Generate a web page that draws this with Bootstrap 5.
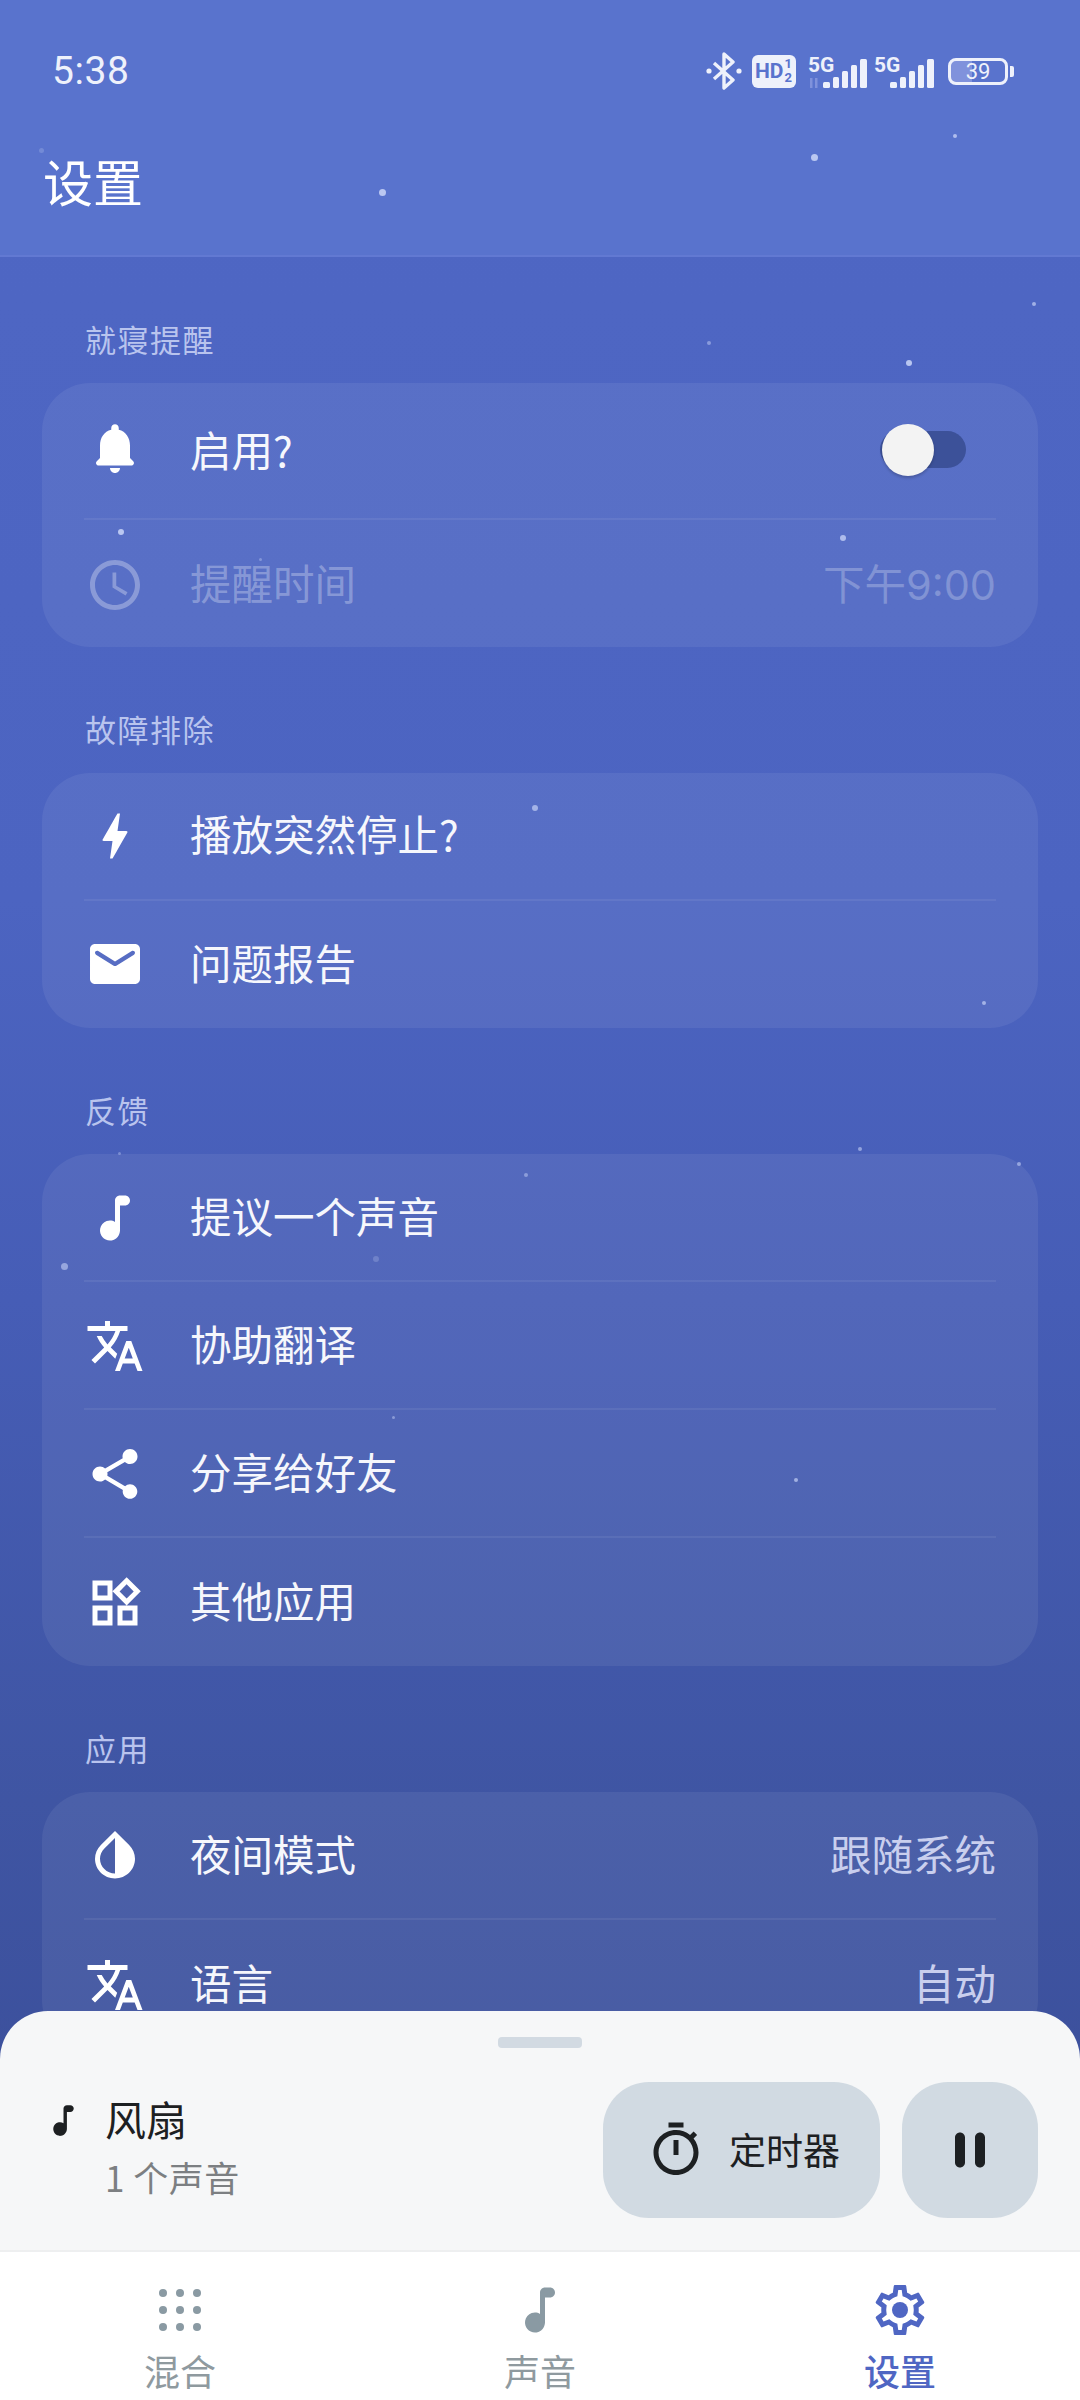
<!DOCTYPE html>
<html lang="zh-CN">
<head>
<meta charset="UTF-8">
<title>设置</title>
<link href="https://cdn.jsdelivr.net/npm/bootstrap@5.3.3/dist/css/bootstrap.min.css" rel="stylesheet">
<style>
    html, body { margin: 0; background: #fff; }
    body, .app-frame { font-family: "Noto Sans CJK SC", "Noto Sans", Roboto, sans-serif; }
    .app-frame { width: 1080px; height: 2400px; background: linear-gradient(180deg, #4f67c4 0, #4c64c1 900px, #465dB6 1300px, #3f55a3 1800px, #3c509c 2100px); }

    .top-head { height: 257px; background: #5973cd; border-bottom: 2px solid #6279d2; }
    .status-row { height: 142px; padding: 0 66px 0 52px; color: #eef1fb; }
    .clock-text { font-family: Roboto, sans-serif; font-size: 39px; letter-spacing: .6px; }
    .page-title { font-size: 50px; line-height: 64px; padding-left: 43px; margin: 6px 0 0; font-weight: 400; color: #fff; }

    .hd-chip { width: 44px; height: 33px; border-radius: 6px; background: #eef1fb; color: #5973cd; font: 700 21px/33px Roboto, sans-serif; padding-left: 3px; margin-left: 10px; margin-right: 12px; gap: 1px; }
    .hd-frac { font-size: 13px; line-height: 14px; }
    .batt-box { width: 60px; height: 27px; border: 3px solid #eef1fb; border-radius: 8px; margin-left: 12px; color: #eef1fb; font: 400 22px/21px Roboto, sans-serif; background: linear-gradient(90deg, #8092dc 0 38%, transparent 38%); }
    .batt-nub { width: 4px; height: 11px; background: #eef1fb; border-radius: 0 2px 2px 0; margin-left: 2px; }

    .set-list { padding: 0 42px; }
    .set-label { height: 126px; padding: 0 0 24px 43px; font-size: 31px; line-height: 40px; letter-spacing: 1.5px; color: #b9c4ee; }
    .set-card { border-radius: 48px; background: rgba(255, 255, 255, .065); }
    .set-row { height: 128px; margin: 0 42px; padding-bottom: 3px; border-bottom: 2px solid rgba(255, 255, 255, .065); color: #f6f7fc; font-size: 41.5px; }
    .set-row:last-child { border-bottom: 0; }
    .set-row.slim { height: 127.5px; padding-bottom: 5px; }
    .set-row.tall { height: 137px; padding-bottom: 2px; }
    .set-row.off { height: 127px; padding-bottom: 2px; color: rgba(255, 255, 255, .3); }
    .set-row.off .set-value { color: rgba(255, 255, 255, .25); }
    .row-icon { width: 60px; height: 60px; margin: 5px 45px 0 1px; flex: none; fill: #fff; }
    .set-row.tall .row-icon { margin-top: -4px; }
    .set-row.off .row-icon { fill: rgba(255, 255, 255, .3); }
    .set-value { color: #c9cfee; font-family: Inter, "Noto Sans CJK SC", sans-serif; margin-top: 6px; }

    .sw-track { width: 86px; height: 37px; border-radius: 19px; background: #3c5199; margin-right: 30px; padding-left: 2px; }
    .sw-thumb { width: 52px; height: 52px; flex: none; border-radius: 50%; background: #f3f3f3; box-shadow: 0 2px 3px rgba(0, 0, 0, .2); }

    .star-dot { border-radius: 50%; background: #c4d0f5; }

    .bottom-wrap { left: 0; right: 0; bottom: 0; z-index: 5; }
    .play-sheet { height: 241px; background: #f6f7f8; border-radius: 48px 48px 0 0; border-bottom: 2px solid #eeeff0; padding: 26px 42px 0; }
    .grab-bar { width: 84px; height: 11px; border-radius: 4px; background: #d2dae2; margin: 0 auto 34px; }
    .note-small { width: 41px; height: 41px; flex: none; fill: #1d2022; margin: 0 21px 60px 1px; }
    .play-text { padding-bottom: 8px; }
    .play-name { font-size: 41px; line-height: 52px; color: #1d2022; }
    .play-sub { font-size: 35px; line-height: 46px; margin-top: 10px; color: #7c7f82; letter-spacing: .5px; }
    .pill-btn { height: 136px; border-radius: 46px; background: #d1dae2; border: 0; color: #1d2022; padding: 0; }
    .pill-btn.timer { width: 277px; font-size: 37px; margin-right: 22px; padding-left: 43px; }
    .pill-btn.pause { width: 136px; }
    .pill-btn svg { width: 60px; height: 60px; flex: none; fill: #1d2022; }
    .pill-btn.timer svg { margin-right: 23px; }

    .tab-bar { height: 148px; background: #fff; }
    .tab-item { width: 360px; color: #8f9a9f; font-size: 36px; line-height: 44px; padding-top: 28px; }
    .tab-item svg { width: 60px; height: 60px; fill: #8a9aa3; display: block; margin-bottom: 8px; }
    .tab-item.on { color: #4f66c3; font-weight: 500; }
    .tab-item.on svg { fill: #4f66c3; }
</style>
</head>
<body>
<div class="app-frame position-relative overflow-hidden" id="app">

    <!-- Header -->
    <div class="top-head">
        <div class="status-row d-flex align-items-center justify-content-between">
            <span class="clock-text">5:38</span>
            <div class="d-flex align-items-center">
                <svg width="36" height="38" viewBox="0 0 36 38" fill="none" stroke="#eef1fb" stroke-width="3.4" stroke-linejoin="round"><path d="M8 11l19 17-9 8V2l9 8L8 27"/><circle cx="3" cy="19" r="2.6" fill="#eef1fb" stroke="none"/><circle cx="33" cy="19" r="2.6" fill="#eef1fb" stroke="none"/></svg>
                <div class="hd-chip d-flex align-items-center">HD<div class="hd-frac d-flex flex-column align-items-center"><span>1</span><span>2</span></div></div>
                <svg width="62" height="38" viewBox="0 0 62 38"><text x="0" y="20" font-family="Roboto, sans-serif" font-weight="700" font-size="21" fill="#eef1fb">5G</text><g fill="#8092dc"><rect x="2" y="26" width="2.5" height="10"/><rect x="7" y="26" width="2.5" height="10"/></g><g fill="#eef1fb"><rect x="15" y="30" width="7" height="6" rx="1.5"/><rect x="25" y="25" width="6" height="11" rx="1.5"/><rect x="34" y="19" width="6" height="17" rx="1.5"/><rect x="43" y="13" width="6" height="23" rx="1.5"/><rect x="52" y="7" width="7" height="29" rx="1.5"/></g></svg>
                <svg width="62" height="38" viewBox="0 0 62 38" class="ms-1"><text x="0" y="20" font-family="Roboto, sans-serif" font-weight="700" font-size="21" fill="#eef1fb">5G</text><g fill="#eef1fb"><rect x="16" y="30" width="7" height="6" rx="1.5"/><rect x="26" y="25" width="6" height="11" rx="1.5"/><rect x="35" y="19" width="6" height="17" rx="1.5"/><rect x="44" y="13" width="6" height="23" rx="1.5"/><rect x="53" y="7" width="7" height="29" rx="1.5"/></g></svg>
                <div class="batt-box text-center">39</div>
                <div class="batt-nub"></div>
            </div>
        </div>
        <h1 class="page-title">设置</h1>
    </div>

    <!-- Settings list -->
    <div class="set-list">
        <div class="set-label d-flex align-items-end">就寝提醒</div>
        <div class="set-card">
            <div class="set-row tall d-flex align-items-center">
                <svg class="row-icon" viewBox="0 0 24 24"><path d="M12 22c1.1 0 2-.9 2-2h-4c0 1.1.9 2 2 2zm6-6v-5c0-3.07-1.63-5.64-4.5-6.32V4c0-.83-.67-1.5-1.5-1.5s-1.5.67-1.5 1.5v.68C7.64 5.36 6 7.92 6 11v5l-1.29 1.29c-.63.63-.19 1.71.7 1.71h13.17c.89 0 1.34-1.08.71-1.71L18 16z"/></svg>
                <span class="flex-grow-1">启用?</span>
                <div class="sw-track d-flex align-items-center"><div class="sw-thumb"></div></div>
            </div>
            <div class="set-row off d-flex align-items-center">
                <svg class="row-icon" viewBox="0 0 24 24"><path d="M11.99 2C6.47 2 2 6.48 2 12s4.47 10 9.99 10C17.52 22 22 17.52 22 12S17.52 2 11.99 2zM12 20c-4.42 0-8-3.58-8-8s3.58-8 8-8 8 3.58 8 8-3.58 8-8 8z"/><path d="M12.5 7H11v6l5.25 3.15.75-1.23-4.5-2.67z"/></svg>
                <span class="flex-grow-1">提醒时间</span>
                <span class="set-value">下午9:00</span>
            </div>
        </div>

        <div class="set-label d-flex align-items-end">故障排除</div>
        <div class="set-card">
            <div class="set-row slim d-flex align-items-center">
                <svg class="row-icon" viewBox="0 0 24 24"><path d="M11 21h-1l1-7H7.5c-.58 0-.57-.32-.38-.66.19-.34.05-.08.07-.12C8.48 10.94 10.42 7.54 13 3h1l-1 7h3.5c.49 0 .56.33.47.51l-.07.15C12.96 17.55 11 21 11 21z"/></svg>
                <span>播放突然停止?</span>
            </div>
            <div class="set-row slim d-flex align-items-center">
                <svg class="row-icon" viewBox="0 0 24 24"><path d="M20 4H4c-1.1 0-1.99.9-1.99 2L2 18c0 1.1.9 2 2 2h16c1.1 0 2-.9 2-2V6c0-1.1-.9-2-2-2zm-.4 4.25l-7.07 4.42c-.32.2-.74.2-1.06 0L4.4 8.25c-.25-.16-.4-.43-.4-.72 0-.67.73-1.07 1.3-.72L12 11l6.7-4.19c.57-.35 1.3.05 1.3.72 0 .29-.15.56-.4.72z"/></svg>
                <span>问题报告</span>
            </div>
        </div>

        <div class="set-label d-flex align-items-end">反馈</div>
        <div class="set-card">
            <div class="set-row d-flex align-items-center">
                <svg class="row-icon" viewBox="0 0 24 24"><path d="M12 5v8.55c-.94-.54-2.1-.75-3.33-.32-1.34.48-2.37 1.67-2.61 3.07-.46 2.74 1.86 5.08 4.59 4.65 1.96-.31 3.35-2.11 3.35-4.1V7h2c1.1 0 2-.9 2-2s-.9-2-2-2h-2c-1.1 0-2 .9-2 2z"/></svg>
                <span>提议一个声音</span>
            </div>
            <div class="set-row d-flex align-items-center">
                <svg class="row-icon" viewBox="0 0 24 24"><path d="M12.87 15.07l-2.54-2.51.03-.03c1.74-1.94 2.98-4.17 3.71-6.53H17V4h-7V2H8v2H1v1.99h11.17C11.5 7.92 10.44 9.75 9 11.35 8.07 10.32 7.3 9.19 6.69 8h-2c.73 1.63 1.73 3.17 2.98 4.56l-5.09 5.02L4 19l5-5 3.11 3.11.76-2.04zM18.5 10h-2L12 22h2l1.12-3h4.75L21 22h2l-4.5-12zm-2.62 7l1.62-4.33L19.12 17h-3.24z"/></svg>
                <span>协助翻译</span>
            </div>
            <div class="set-row d-flex align-items-center">
                <svg class="row-icon" viewBox="0 0 24 24"><path d="M18 16.08c-.76 0-1.44.3-1.96.77L8.91 12.7c.05-.23.09-.46.09-.7s-.04-.47-.09-.7l7.05-4.11c.54.5 1.25.81 2.04.81 1.66 0 3-1.34 3-3s-1.34-3-3-3-3 1.34-3 3c0 .24.04.47.09.7L8.04 9.81C7.5 9.31 6.79 9 6 9c-1.66 0-3 1.34-3 3s1.34 3 3 3c.79 0 1.5-.31 2.04-.81l7.12 4.16c-.05.21-.08.43-.08.65 0 1.61 1.31 2.92 2.92 2.92 1.61 0 2.92-1.31 2.92-2.92s-1.31-2.92-2.92-2.92z"/></svg>
                <span>分享给好友</span>
            </div>
            <div class="set-row d-flex align-items-center">
                <svg class="row-icon" viewBox="0 0 24 24"><path d="M16.66 4.52l2.83 2.83-2.83 2.83-2.83-2.83 2.83-2.83M9 5v4H5V5h4m10 10v4h-4v-4h4M9 15v4H5v-4h4m7.66-13.31L11 7.34 16.66 13l5.66-5.66-5.66-5.65zM11 3H3v8h8V3zm10 10h-8v8h8v-8zm-10 0H3v8h8v-8z"/></svg>
                <span>其他应用</span>
            </div>
        </div>

        <div class="set-label d-flex align-items-end">应用</div>
        <div class="set-card">
            <div class="set-row d-flex align-items-center">
                <svg class="row-icon" viewBox="0 0 24 24"><path d="M12 4.81V19c-3.31 0-6-2.63-6-5.87 0-1.56.62-3.03 1.75-4.14L12 4.81M6.35 7.56C4.9 8.99 4 10.96 4 13.13 4 17.48 7.58 21 12 21s8-3.52 8-7.87c0-2.17-.9-4.14-2.35-5.57L12 2 6.35 7.56z"/></svg>
                <span class="flex-grow-1">夜间模式</span>
                <span class="set-value">跟随系统</span>
            </div>
            <div class="set-row d-flex align-items-center">
                <svg class="row-icon" viewBox="0 0 24 24"><path d="M12.87 15.07l-2.54-2.51.03-.03c1.74-1.94 2.98-4.17 3.71-6.53H17V4h-7V2H8v2H1v1.99h11.17C11.5 7.92 10.44 9.75 9 11.35 8.07 10.32 7.3 9.19 6.69 8h-2c.73 1.63 1.73 3.17 2.98 4.56l-5.09 5.02L4 19l5-5 3.11 3.11.76-2.04zM18.5 10h-2L12 22h2l1.12-3h4.75L21 22h2l-4.5-12zm-2.62 7l1.62-4.33L19.12 17h-3.24z"/></svg>
                <span class="flex-grow-1">语言</span>
                <span class="set-value">自动</span>
            </div>
        </div>
    </div>

    <!-- Player sheet and tabs sit over the list -->
    <div class="bottom-wrap position-absolute">
        <div class="play-sheet">
            <div class="grab-bar"></div>
            <div class="d-flex align-items-center">
                <svg class="note-small" viewBox="0 0 24 24"><path d="M12 5v8.55c-.94-.54-2.1-.75-3.33-.32-1.34.48-2.37 1.67-2.61 3.07-.46 2.74 1.86 5.08 4.59 4.65 1.96-.31 3.35-2.11 3.35-4.1V7h2c1.1 0 2-.9 2-2s-.9-2-2-2h-2c-1.1 0-2 .9-2 2z"/></svg>
                <div class="play-text flex-grow-1">
                    <div class="play-name">风扇</div>
                    <div class="play-sub">1 个声音</div>
                </div>
                <button class="btn pill-btn timer d-flex align-items-center">
                    <svg viewBox="0 0 24 24"><path d="M9 1h6v2H9zM19.03 7.39l1.42-1.42c-.43-.51-.9-.99-1.41-1.41l-1.42 1.42C16.07 4.74 14.12 4 12 4c-4.97 0-9 4.03-9 9s4.02 9 9 9 9-4.03 9-9c0-2.12-.74-4.07-1.97-5.61zM12 20c-3.87 0-7-3.13-7-7s3.13-7 7-7 7 3.13 7 7-3.13 7-7 7z"/><path d="M11 8h2v6h-2z"/></svg>
                    定时器
                </button>
                <button class="btn pill-btn pause d-flex align-items-center justify-content-center">
                    <svg viewBox="0 0 24 24"><path d="M8 19c1.1 0 2-.9 2-2V7c0-1.1-.9-2-2-2s-2 .9-2 2v10c0 1.1.9 2 2 2zm6-12v10c0 1.1.9 2 2 2s2-.9 2-2V7c0-1.1-.9-2-2-2s-2 .9-2 2z"/></svg>
                </button>
            </div>
        </div>
        <div class="tab-bar d-flex">
            <div class="tab-item d-flex flex-column align-items-center">
                <svg viewBox="0 0 60 60"><circle cx="13" cy="13" r="4"/><circle cx="30" cy="13" r="4"/><circle cx="47" cy="13" r="4"/><circle cx="13" cy="30" r="4"/><circle cx="30" cy="30" r="4"/><circle cx="47" cy="30" r="4"/><circle cx="13" cy="47" r="4"/><circle cx="30" cy="47" r="4"/><circle cx="47" cy="47" r="4"/></svg>
                混合
            </div>
            <div class="tab-item d-flex flex-column align-items-center">
                <svg viewBox="0 0 24 24"><path d="M12 5v8.55c-.94-.54-2.1-.75-3.33-.32-1.34.48-2.37 1.67-2.61 3.07-.46 2.74 1.86 5.08 4.59 4.65 1.96-.31 3.35-2.11 3.35-4.1V7h2c1.1 0 2-.9 2-2s-.9-2-2-2h-2c-1.1 0-2 .9-2 2z"/></svg>
                声音
            </div>
            <div class="tab-item on d-flex flex-column align-items-center">
                <svg viewBox="0 0 24 24"><path d="M19.43 12.98c.04-.32.07-.64.07-.98 0-.34-.03-.66-.07-.98l2.11-1.65c.19-.15.24-.42.12-.64l-2-3.46c-.09-.16-.26-.25-.44-.25-.06 0-.12.01-.17.03l-2.49 1c-.52-.4-1.08-.73-1.69-.98l-.38-2.65C14.46 2.18 14.25 2 14 2h-4c-.25 0-.46.18-.49.42l-.38 2.65c-.61.25-1.17.59-1.69.98l-2.49-1c-.06-.02-.12-.03-.18-.03-.17 0-.34.09-.43.25l-2 3.46c-.13.22-.07.49.12.64l2.11 1.65c-.04.32-.07.65-.07.98 0 .33.03.66.07.98l-2.11 1.65c-.19.15-.24.42-.12.64l2 3.46c.09.16.26.25.44.25.06 0 .12-.01.17-.03l2.49-1c.52.4 1.08.73 1.69.98l.38 2.65c.03.24.24.42.49.42h4c.25 0 .46-.18.49-.42l.38-2.65c.61-.25 1.17-.59 1.69-.98l2.49 1c.06.02.12.03.18.03.17 0 .34-.09.43-.25l2-3.46c.12-.22.07-.49-.12-.64l-2.11-1.65zm-1.98-1.71c.04.31.05.52.05.73 0 .21-.02.43-.05.73l-.14 1.13.89.7 1.08.84-.7 1.21-1.27-.51-1.04-.42-.9.68c-.43.32-.84.56-1.25.73l-1.06.43-.16 1.13-.2 1.35h-1.4l-.19-1.35-.16-1.13-1.06-.43c-.43-.18-.83-.41-1.23-.71l-.91-.7-1.06.43-1.27.51-.7-1.21 1.08-.84.89-.7-.14-1.13c-.03-.31-.05-.54-.05-.74s.02-.43.05-.73l.14-1.13-.89-.7-1.08-.84.7-1.21 1.27.51 1.04.42.9-.68c.43-.32.84-.56 1.25-.73l1.06-.43.16-1.13.2-1.35h1.39l.19 1.35.16 1.13 1.06.43c.43.18.83.41 1.23.71l.91.7 1.06-.43 1.27-.51.7 1.21-1.07.85-.89.7.14 1.13z"/><circle cx="12" cy="12" r="3.2"/></svg>
                设置
            </div>
        </div>
    </div>
</div>

<script src="https://cdn.jsdelivr.net/npm/bootstrap@5.3.3/dist/js/bootstrap.bundle.min.js"></script>
<script>
    // background stars: x, y, diameter, opacity
    const stars = [
        [382, 192, 7, .9], [814, 157, 7, .9], [955, 136, 4, .8], [41, 150, 5, .25],
        [709, 343, 4, .5], [909, 363, 6, .9], [1034, 304, 4, .7], [121, 532, 6, .9],
        [843, 538, 6, .8], [260, 559, 3, .4], [535, 808, 6, .7], [984, 1003, 4, .7],
        [860, 1149, 4, .6], [1019, 1164, 4, .6], [526, 1175, 4, .5], [119, 1153, 3, .4],
        [64, 1266, 7, .6], [376, 1259, 6, .25], [393, 1417, 3, .5], [796, 1480, 4, .7]
    ];
    const app = document.getElementById("app");
    stars.forEach(s => {
        const dot = document.createElement("div");
        dot.className = "star-dot position-absolute";
        dot.style.left = (s[0] - s[2] / 2) + "px";
        dot.style.top = (s[1] - s[2] / 2) + "px";
        dot.style.width = s[2] + "px";
        dot.style.height = s[2] + "px";
        dot.style.opacity = s[3];
        app.appendChild(dot);
    });
</script>
</body>
</html>
